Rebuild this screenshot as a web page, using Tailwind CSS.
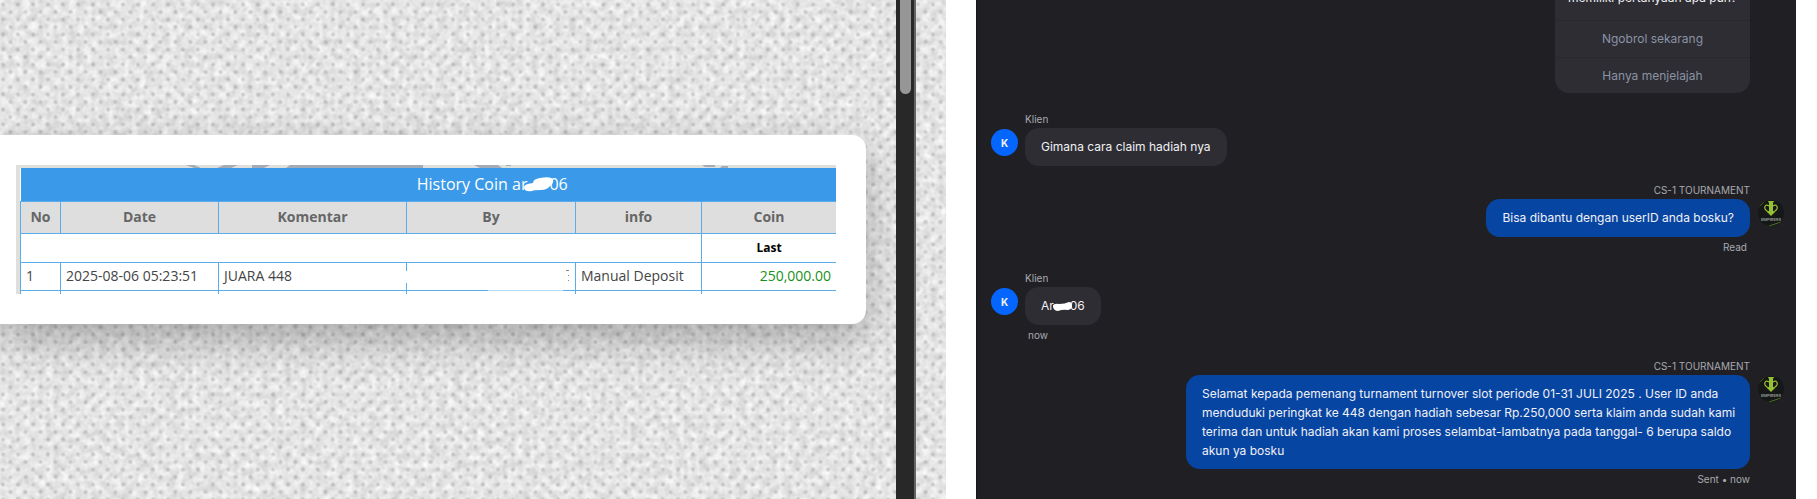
<!DOCTYPE html>
<html lang="id">

<head>
    <meta charset="UTF-8">
    <meta name="viewport" content="width=device-width, initial-scale=1.0">
    <title>Claim Hadiah Tournament</title>
    <script src="https://cdn.jsdelivr.net/npm/@tailwindcss/browser@4"></script>
</head>

<body class="bg-white">
    <div class="grid grid-cols-[946fr_30px_820fr_21px] h-screen overflow-hidden">

        <!-- History coin -->
        <section class="relative flex overflow-hidden bg-[#e2e2e2] font-['Open_Sans',sans-serif]">
            <svg class="absolute inset-0 w-full h-full" aria-hidden="true">
                <defs>
                    <filter id="grain" x="0" y="0" width="100%" height="100%" color-interpolation-filters="sRGB">
                        <feTurbulence type="fractalNoise" baseFrequency="0.13" numOctaves="2" seed="4" />
                        <feColorMatrix values="0.22 0 0 0 0.79  0.22 0 0 0 0.79  0.22 0 0 0 0.79  0 0 0 0 1" />
                    </filter>
                    <radialGradient id="dot">
                        <stop offset="0" stop-color="#808080" stop-opacity=".42" />
                        <stop offset="1" stop-color="#808080" stop-opacity="0" />
                    </radialGradient>
                    <pattern id="weave" width="15" height="15" patternUnits="userSpaceOnUse">
                        <circle cx="3" cy="4.5" r="3" fill="url(#dot)" />
                        <circle cx="10.5" cy="12" r="3" fill="url(#dot)" />
                    </pattern>
                </defs>
                <rect width="100%" height="100%" filter="url(#grain)" />
                <rect width="100%" height="100%" fill="url(#weave)" />
            </svg>

            <div class="relative flex flex-1 items-center pb-10 pr-[30px]">
                <div class="w-full bg-white rounded-r-[14px] py-[30px] pl-4 pr-[30px] shadow-[0_15px_40px_rgba(0,0,0,0.28)]">
                    <div class="relative bg-[#dfe0dc] pt-[3px] pl-1">
                        <svg class="absolute top-0 left-0 w-full h-[3px]" viewBox="0 0 820 3" preserveAspectRatio="none" fill="#a5abb4" aria-hidden="true">
                            <path d="M170 0h8l7 3h-7zM208 0h14l-7 3h-14zM236 0h18l-6 3h-12zM274 0h133v3H270zM458 0h24l4 3h-22zM490 0h5v1h-5zM686 0h13v2h-10zM706 1h6v2h-8z" />
                        </svg>
                        <table class="w-full table-fixed border-collapse bg-white text-sm leading-5 text-[#444]">
                            <colgroup>
                                <col class="w-10">
                                <col class="w-[158px]">
                                <col class="w-[188px]">
                                <col class="w-[169px]">
                                <col class="w-[126px]">
                                <col>
                            </colgroup>
                            <thead>
                                <tr class="h-[33px] bg-[#3a9ae9] text-white">
                                    <th colspan="6" class="pl-32 text-base leading-5 font-normal">
                                        <span class="inline-flex items-center">History Coin ar<svg class="relative w-8 h-5 -ml-1 -mr-1.5" viewBox="0 0 32 20" fill="#fff" aria-label="disembunyikan"><path d="M1 14q-1-4 9-5 0-4 7-5 12-2 13 2 1 3-3 6-3 4-9 4-7 0-9 1-7 1-8-3z" /></svg>06</span>
                                    </th>
                                </tr>
                                <tr class="h-8 bg-[#dedede] text-[#666]">
                                    <th class="border border-[#5aaceb]">No</th>
                                    <th class="border border-[#5aaceb]">Date</th>
                                    <th class="border border-[#5aaceb]">Komentar</th>
                                    <th class="border border-[#5aaceb]">By</th>
                                    <th class="border border-[#5aaceb]">info</th>
                                    <th class="border border-r-0 border-[#5aaceb]">Coin</th>
                                </tr>
                            </thead>
                            <tbody>
                                <tr class="h-[29px]">
                                    <td colspan="5" class="border border-[#5aaceb]"></td>
                                    <th class="border border-r-0 border-[#5aaceb] text-xs text-black">Last</th>
                                </tr>
                                <tr class="h-7">
                                    <td class="border border-[#5aaceb] px-[5px]">1</td>
                                    <td class="border border-[#5aaceb] px-[5px] whitespace-nowrap">2025-08-06 05:23:51</td>
                                    <td class="border border-[#5aaceb] px-[5px]">JUARA 448</td>
                                    <td class="relative border border-[#5aaceb] px-[5px]">
                                        <span class="absolute -left-1 top-2 w-2 h-3 bg-white"></span>
                                        <span class="absolute right-3 -bottom-px w-[75px] h-px bg-[#b5daf7]"></span>
                                        <svg class="ml-auto w-1 h-3" viewBox="0 0 4 12" fill="#888" aria-hidden="true"><path d="M0 0h3v1H0zM2 5h1v1H2zM2 10h1v1H2z" /></svg>
                                    </td>
                                    <td class="border border-[#5aaceb] px-[5px] whitespace-nowrap">Manual Deposit</td>
                                    <td class="border border-r-0 border-[#5aaceb] px-[5px] text-right text-[#1a8f1a]">250,000.00</td>
                                </tr>
                                <tr class="h-1" aria-hidden="true">
                                    <td class="border-x border-[#5aaceb]"></td>
                                    <td class="border-x border-[#5aaceb]"></td>
                                    <td class="border-x border-[#5aaceb]"></td>
                                    <td class="border-x border-[#5aaceb]"></td>
                                    <td class="border-x border-[#5aaceb]"></td>
                                    <td></td>
                                </tr>
                            </tbody>
                        </table>
                    </div>
                </div>
            </div>

            <div class="relative w-5 mr-[30px] pl-1 bg-[#282828] border-r-2 border-[#646464]">
                <div class="w-[11px] h-[94px] rounded-b-full bg-[#969696]"></div>
            </div>
        </section>

        <!-- Chat -->
        <main class="col-start-3 flex flex-col gap-[17px] overflow-hidden bg-[#202024] border-l border-[#17171b] pl-[14px] pr-3 text-xs leading-[18px] text-[#f1f1f3] font-[Inter,sans-serif]">
            <div class="self-end shrink-0 w-[195px] -mt-8 mb-0.5 mr-[34px] rounded-[14px] bg-[#2d2d33] text-center text-[#8b93a5]">
                <p class="pt-[21px] pb-[13px] text-[#f1f1f3] whitespace-nowrap">memiliki pertanyaan apa pun?</p>
                <button type="button" class="block w-full h-[37px] border-t border-[#28282d]">Ngobrol sekarang</button>
                <button type="button" class="block w-full h-9 border-t border-[#28282d]">Hanya menjelajah</button>
            </div>

            <div class="flex items-start gap-[7px]">
                <div class="flex items-center justify-center size-[27px] mt-[17px] rounded-full bg-[#0566ff] text-[10px] font-bold">K</div>
                <div class="flex flex-col items-start">
                    <p class="mb-0.5 text-[10px] leading-[14px] text-[#a9a9b0]">Klien</p>
                    <p class="rounded-[14px] bg-[#2d2d33] px-4 py-[10px]">Gimana cara claim hadiah nya</p>
                </div>
            </div>

            <div class="flex items-start justify-end gap-2">
                <div class="flex flex-col items-end">
                    <p class="mb-0.5 text-[10px] leading-[14px] text-[#a9a9b0]">CS-1 TOURNAMENT</p>
                    <p class="rounded-[14px] bg-[#0745a3] px-4 py-[10px]">Bisa dibantu dengan userID anda bosku?</p>
                    <p class="mt-[3px] mr-[3px] text-[10px] leading-[14px] text-[#a9a9b0]">Read</p>
                </div>
                <svg class="shrink-0 size-[26px] mt-[17px]" viewBox="0 0 26 26" aria-hidden="true">
                    <defs>
                        <clipPath id="round"><circle cx="13" cy="13" r="13" /></clipPath>
                    </defs>
                    <g id="logo" clip-path="url(#round)">
                        <rect width="26" height="26" fill="#151817" />
                        <path d="M1 7l6-6M11 26l12-4" stroke="#52701f" fill="none" />
                        <path d="M10 1h6l-1 2v8l2 1-4 4-4-4 2-1V3z" fill="#97bf35" />
                        <path d="M11 6C8 4 6 6 7 9c1 2 3 3 5 4M15 6c3-2 5 0 4 3-1 2-3 3-5 4" stroke="#97bf35" stroke-width="1.3" fill="none" />
                        <text x="13" y="21" fill="#8e918d" font-family="Inter, sans-serif" font-size="4" font-weight="700" text-anchor="middle">EMPIRE88</text>
                    </g>
                </svg>
            </div>

            <div class="flex items-start gap-[7px]">
                <div class="flex items-center justify-center size-[27px] mt-[17px] rounded-full bg-[#0566ff] text-[10px] font-bold">K</div>
                <div class="flex flex-col items-start">
                    <p class="mb-0.5 text-[10px] leading-[14px] text-[#a9a9b0]">Klien</p>
                    <p class="flex items-center rounded-[14px] bg-[#2d2d33] px-4 py-[10px]">Ar<svg class="relative w-5 h-[18px] -ml-0.5 -mr-0.5" viewBox="0 0 20 18" fill="#fff" aria-label="disembunyikan"><path d="M1 8q3-2 6-1 6 0 10-2 3 0 3 4 0 3-4 4-5-1-10 1-4 0-5-4z" /></svg>06</p>
                    <p class="mt-[3px] ml-[3px] text-[10px] leading-[14px] text-[#a9a9b0]">now</p>
                </div>
            </div>

            <div class="flex items-start justify-end gap-2">
                <div class="flex flex-col items-end">
                    <p class="mb-0.5 text-[10px] leading-[14px] text-[#a9a9b0]">CS-1 TOURNAMENT</p>
                    <p class="max-w-[564px] rounded-[14px] bg-[#0745a3] pl-4 pr-2 py-[9px] leading-[19px]">Selamat kepada pemenang turnament turnover slot periode 01-31 JULI 2025 . User ID anda menduduki peringkat ke 448 dengan hadiah sebesar Rp.250,000 serta klaim anda sudah kami terima dan untuk hadiah akan kami proses selambat-lambatnya pada tanggal- 6 berupa saldo akun ya bosku</p>
                    <p class="mt-[3px] text-[10px] leading-[14px] text-[#a9a9b0]">Sent • now</p>
                </div>
                <svg class="shrink-0 size-[26px] mt-[17px]" viewBox="0 0 26 26" aria-hidden="true">
                    <use href="#logo" />
                </svg>
            </div>
        </main>
    </div>
</body>

</html>
